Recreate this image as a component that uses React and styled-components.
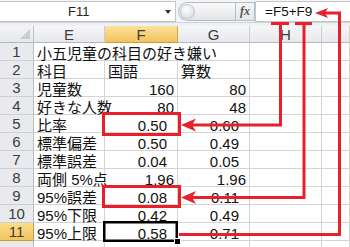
import React from 'react';
import styled, { createGlobalStyle } from 'styled-components';

const RED = '#e6212b';

const GlobalStyle = createGlobalStyle`
  html, body { margin: 0; padding: 0; background: #fff; }
  body { font-family: "Liberation Sans", "Noto Sans CJK JP", sans-serif; }
`;

const Screen = styled.div`
  position: relative;
  width: 350px;
  height: 247px;
  overflow: hidden;
  background: #fff;
`;

const FormulaBar = styled.div`
  display: flex;
  align-items: stretch;
  height: 22px;
  background: #f3f4f6;
  box-sizing: border-box;
  padding-top: 1px;
`;

const NameBox = styled.div`
  position: relative;
  width: 176px;
  box-sizing: border-box;
  background: #fff;
  border: 1px solid #c3c7cc;
  border-left: none;
  font-size: 13px;
  line-height: 19px;
  color: #222;
  padding-left: 68px;
`;

const DropArrow = styled.span`
  position: absolute;
  right: 4px;
  top: 8px;
  border-left: 3.5px solid transparent;
  border-right: 3.5px solid transparent;
  border-top: 4px solid #333;
`;

const Grip = styled.div`
  display: flex;
  width: 77px;
  margin-left: 2px;
  padding: 1px 0;
  box-sizing: border-box;
`;

const Knob = styled.div`
  flex: 1;
  border: 1px solid #b9bdc3;
  border-right: none;
  border-radius: 10px 0 0 10px;
  background: linear-gradient(#fafafa, #e2e4e7);
  position: relative;
  &::before {
    content: '';
    position: absolute;
    left: 1px;
    top: 1px;
    width: 15px;
    height: 15px;
    border-radius: 50%;
    background: radial-gradient(circle at 40% 35%, #ffffff, #d2d5d9);
    border: 1px solid #c3c6ca;
    box-sizing: border-box;
  }
`;

const FxButton = styled.div`
  width: 18px;
  border: 1px solid #b9bdc3;
  background: linear-gradient(#f4f5f6, #e4e6e9);
  font-family: "Liberation Serif", serif;
  font-style: italic;
  font-weight: bold;
  font-size: 12px;
  line-height: 17px;
  color: #555;
  text-align: center;
`;

const FormulaInput = styled.div`
  flex: 1;
  background: #fff;
  border: 1px solid #c3c7cc;
  border-right: none;
  font-size: 13.5px;
  line-height: 19px;
  color: #111;
  padding-left: 9px;
`;

const Divider = styled.div`
  height: 4px;
  box-sizing: border-box;
  background: #eef0f3;
  border-top: 1px solid #d0d3d8;
`;

const Sheet = styled.div`
  display: grid;
  grid-template-columns: 34px 71px 73px 72px 72px 1fr;
  grid-auto-rows: 18px;
  grid-template-rows: 17px;
`;

const Corner = styled.div`
  position: relative;
  box-sizing: border-box;
  background: linear-gradient(#f3f4f6, #e5e7ea);
  border-right: 1px solid #bfc3c8;
  border-bottom: 1px solid #b5b9bf;
  &::after {
    content: '';
    position: absolute;
    right: 3px;
    bottom: 3px;
    border-left: 10px solid transparent;
    border-bottom: 10px solid #c9ccd1;
  }
`;

const ColHeader = styled.div`
  box-sizing: border-box;
  background: ${p => (p.$active ? 'linear-gradient(#fbe29e, #f3c35a)' : 'linear-gradient(#f6f7f8, #e6e8eb)')};
  border-right: 1px solid ${p => (p.$active ? '#d9aa48' : '#c9ccd1')};
  border-bottom: 1px solid ${p => (p.$active ? '#d19b2f' : '#b5b9bf')};
  font-size: 15px;
  line-height: 17px;
  color: #3c3c3c;
  text-align: center;
`;

const RowHeader = styled.div`
  box-sizing: border-box;
  background: ${p => (p.$active ? 'linear-gradient(#fbdd88, #f3c45e)' : '#e8eaed')};
  border-right: 1px solid ${p => (p.$active ? '#c99a3a' : '#b9bdc3')};
  border-bottom: 1px solid ${p => (p.$active ? '#c99a3a' : '#cdd0d4')};
  font-size: 15px;
  line-height: 17px;
  color: #3c3c3c;
  text-align: center;
`;

const Cell = styled.div`
  box-sizing: border-box;
  height: 18px;
  padding-top: 2px;
  border-right: 1px solid #d4d4d4;
  border-bottom: 1px solid #d4d4d4;
  font-size: 15px;
  line-height: 17px;
  color: #111;
  white-space: nowrap;
  text-align: ${p => (p.$num ? 'right' : 'left')};
  padding-left: ${p => (p.$num ? 0 : 3)}px;
  padding-right: ${p => (p.$num ? (p.$tight ? 3 : 10) : 0)}px;
  grid-column: ${p => (p.$span ? `span ${p.$span}` : 'auto')};
`;

// row 12 only peeks in at the bottom edge, so it carries no label
const rows = [
  { n: 1, title: '小五児童の科目の好き嫌い' },
  { n: 2, e: '科目', f: '国語', g: '算数' },
  { n: 3, e: '児童数', f: '160', g: '80', num: true, tight: true },
  { n: 4, e: '好きな人数', f: '80', g: '48', num: true, tight: true },
  { n: 5, e: '比率', f: '0.50', g: '0.60', num: true },
  { n: 6, e: '標準偏差', f: '0.50', g: '0.49', num: true },
  { n: 7, e: '標準誤差', f: '0.04', g: '0.05', num: true },
  { n: 8, e: '両側 5%点', f: '1.96', g: '1.96', num: true, tight: true },
  { n: 9, e: '95%誤差', f: '0.08', g: '0.11', num: true },
  { n: 10, e: '95%下限', f: '0.42', g: '0.49', num: true },
  { n: 11, e: '95%上限', f: '0.58', g: '0.71', num: true },
  { n: 12, hidden: true },
];

const Overlay = styled.svg`
  position: absolute;
  left: 0;
  top: 0;
  width: 350px;
  height: 247px;
  pointer-events: none;
`;

const Arrows = () => (
  <Overlay viewBox="0 0 350 247">
    <g fill="none" stroke={RED} strokeWidth="3">
      <rect x="103.5" y="113.5" width="76" height="21" />
      <rect x="103.5" y="186.5" width="76" height="20" />
      <line x1="271" y1="23.5" x2="289" y2="23.5" />
      <line x1="295" y1="23.5" x2="312" y2="23.5" />
      <polyline points="280.5,23.5 280.5,125 190,125" />
      <polyline points="304,23.5 304,197.5 190,197.5" />
      <polyline points="324,13 339.5,13 339.5,234.5 179,234.5" />
    </g>
    <g fill={RED}>
      <polygon points="181,125 196,118.5 192,125 196,131.5" />
      <polygon points="181,197.5 196,191 192,197.5 196,204" />
      <polygon points="315,13 328,8 325,13 328,18" />
    </g>
    <rect x="104.25" y="222.25" width="72.5" height="18.5" fill="none" stroke="#000" strokeWidth="2.5" />
    <rect x="174.5" y="238.5" width="6" height="6" fill="#000" stroke="#fff" strokeWidth="1" />
  </Overlay>
);

const App = () => (
  <Screen>
    <GlobalStyle />
    <FormulaBar>
      <NameBox>
        F11
        <DropArrow />
      </NameBox>
      <Grip>
        <Knob />
        <FxButton>fx</FxButton>
      </Grip>
      <FormulaInput>=F5+F9</FormulaInput>
    </FormulaBar>
    <Divider />
    <Sheet>
      <Corner />
      <ColHeader>E</ColHeader>
      <ColHeader $active>F</ColHeader>
      <ColHeader>G</ColHeader>
      <ColHeader>H</ColHeader>
      <ColHeader />
      {rows.map(r => (
        <React.Fragment key={r.n}>
          <RowHeader $active={r.n === 11}>{r.hidden ? null : r.n}</RowHeader>
          {r.title ? (
            <Cell $span={3}>{r.title}</Cell>
          ) : (
            <>
              <Cell>{r.e}</Cell>
              <Cell $num={r.num} $tight={r.tight}>{r.f}</Cell>
              <Cell $num={r.num} $tight={r.tight}>{r.g}</Cell>
            </>
          )}
          <Cell />
          <Cell />
        </React.Fragment>
      ))}
    </Sheet>
    <Arrows />
  </Screen>
);

export default App;
